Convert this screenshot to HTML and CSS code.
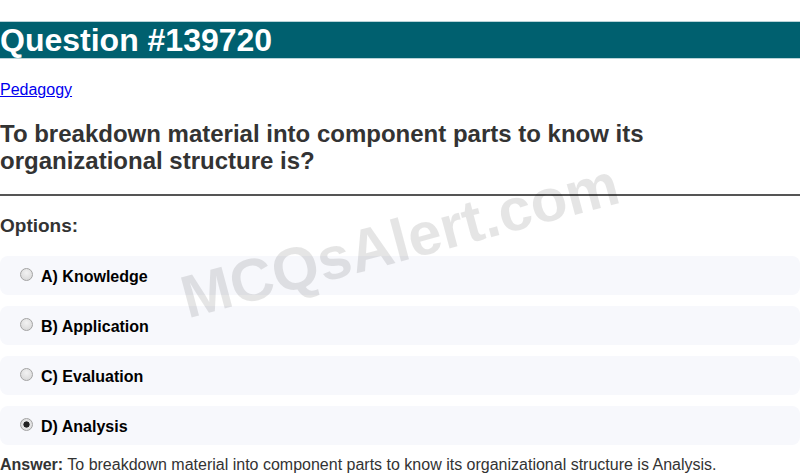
FILE: index.html
```html
<!DOCTYPE html>
<html>
<head>
<meta charset="utf-8">
<link rel="stylesheet" href="styles.css">
</head>
<body>
<div class="page">
  <h1 class="title">Question #139720</h1>
  <p class="cat"><a href="#">Pedagogy</a></p>
  <h2 class="question">To breakdown material into component parts to know its organizational structure is?</h2>
  <hr class="rule">
  <h3 class="opts-title">Options:</h3>
  <div class="options">
    <label class="option"><span class="radio"></span><span class="opt-text">A) Knowledge</span></label>
    <label class="option"><span class="radio"></span><span class="opt-text">B) Application</span></label>
    <label class="option"><span class="radio"></span><span class="opt-text">C) Evaluation</span></label>
    <label class="option"><span class="radio checked"></span><span class="opt-text">D) Analysis</span></label>
  </div>
  <p class="answer"><strong>Answer:</strong> To breakdown material into component parts to know its organizational structure is Analysis.</p>
  <div class="watermark">MCQsAlert.com</div>
</div>
</body>
</html>
```
FILE: styles.css
```css
html, body {
  margin: 0;
  padding: 0;
  background: #fff;
}
body {
  font-family: "Liberation Sans", Arial, sans-serif;
  color: #333;
  overflow: hidden;
}
.page {
  position: relative;
  height: 474px;
  overflow: hidden;
  padding-top: 22px;
  box-sizing: border-box;
}
.title {
  margin: 0;
  height: 36px;
  line-height: 36px;
  background: #00606f;
  color: #fff;
  font-size: 32px;
  font-weight: bold;
  border-top: 1px solid #b9d3d8;
  border-bottom: 1px solid #b9d3d8;
  box-sizing: content-box;
  margin-top: -1px;
}
.cat {
  margin: 22px 0 0 0;
  font-size: 16px;
  line-height: 18px;
}
.cat a {
  color: #0000ee;
  text-decoration: underline;
}
.question {
  margin: 21px 0 0 0;
  font-size: 24px;
  line-height: 27px;
  font-weight: bold;
  color: #333;
}
.rule {
  margin: 20px 0 0 0;
  border: 0;
  height: 2px;
  background: #555;
}
.opts-title {
  margin: 19px 0 0 0;
  font-size: 19px;
  line-height: 22px;
  font-weight: bold;
  color: #333;
}
.options {
  margin-top: 19px;
  display: flex;
  flex-direction: column;
  gap: 11px;
}
.option {
  display: flex;
  align-items: center;
  height: 39px;
  padding-left: 20px;
  background: #f7f8fc;
  border-radius: 8px;
  box-sizing: border-box;
}
.radio {
  width: 13px;
  height: 13px;
  border-radius: 50%;
  box-sizing: border-box;
  border: 1px solid #a3a3a3;
  background: radial-gradient(circle at 50% 35%, #f2f2f2 0%, #d4d4d4 100%);
  margin-top: -2px;
  position: relative;
}
.radio.checked {
  background: radial-gradient(circle, #222 0 2.8px, #e6e6e6 3.4px, #d8d8d8 100%);
}
.opt-text {
  margin-left: 8px;
  margin-top: 2px;
  font-size: 16px;
  font-weight: bold;
  color: #000;
}
.answer {
  margin: 11px 0 0 0;
  font-size: 16px;
  line-height: 18px;
  color: #333;
}
.answer strong {
  color: #333;
}
.watermark {
  position: absolute;
  left: 50%;
  top: calc(50% + 4px);
  transform: translate(-50%, -50%) rotate(-15deg);
  font-size: 60px;
  font-weight: bold;
  color: rgba(0, 0, 0, 0.1);
  white-space: nowrap;
  pointer-events: none;
  line-height: 1;
}
```
